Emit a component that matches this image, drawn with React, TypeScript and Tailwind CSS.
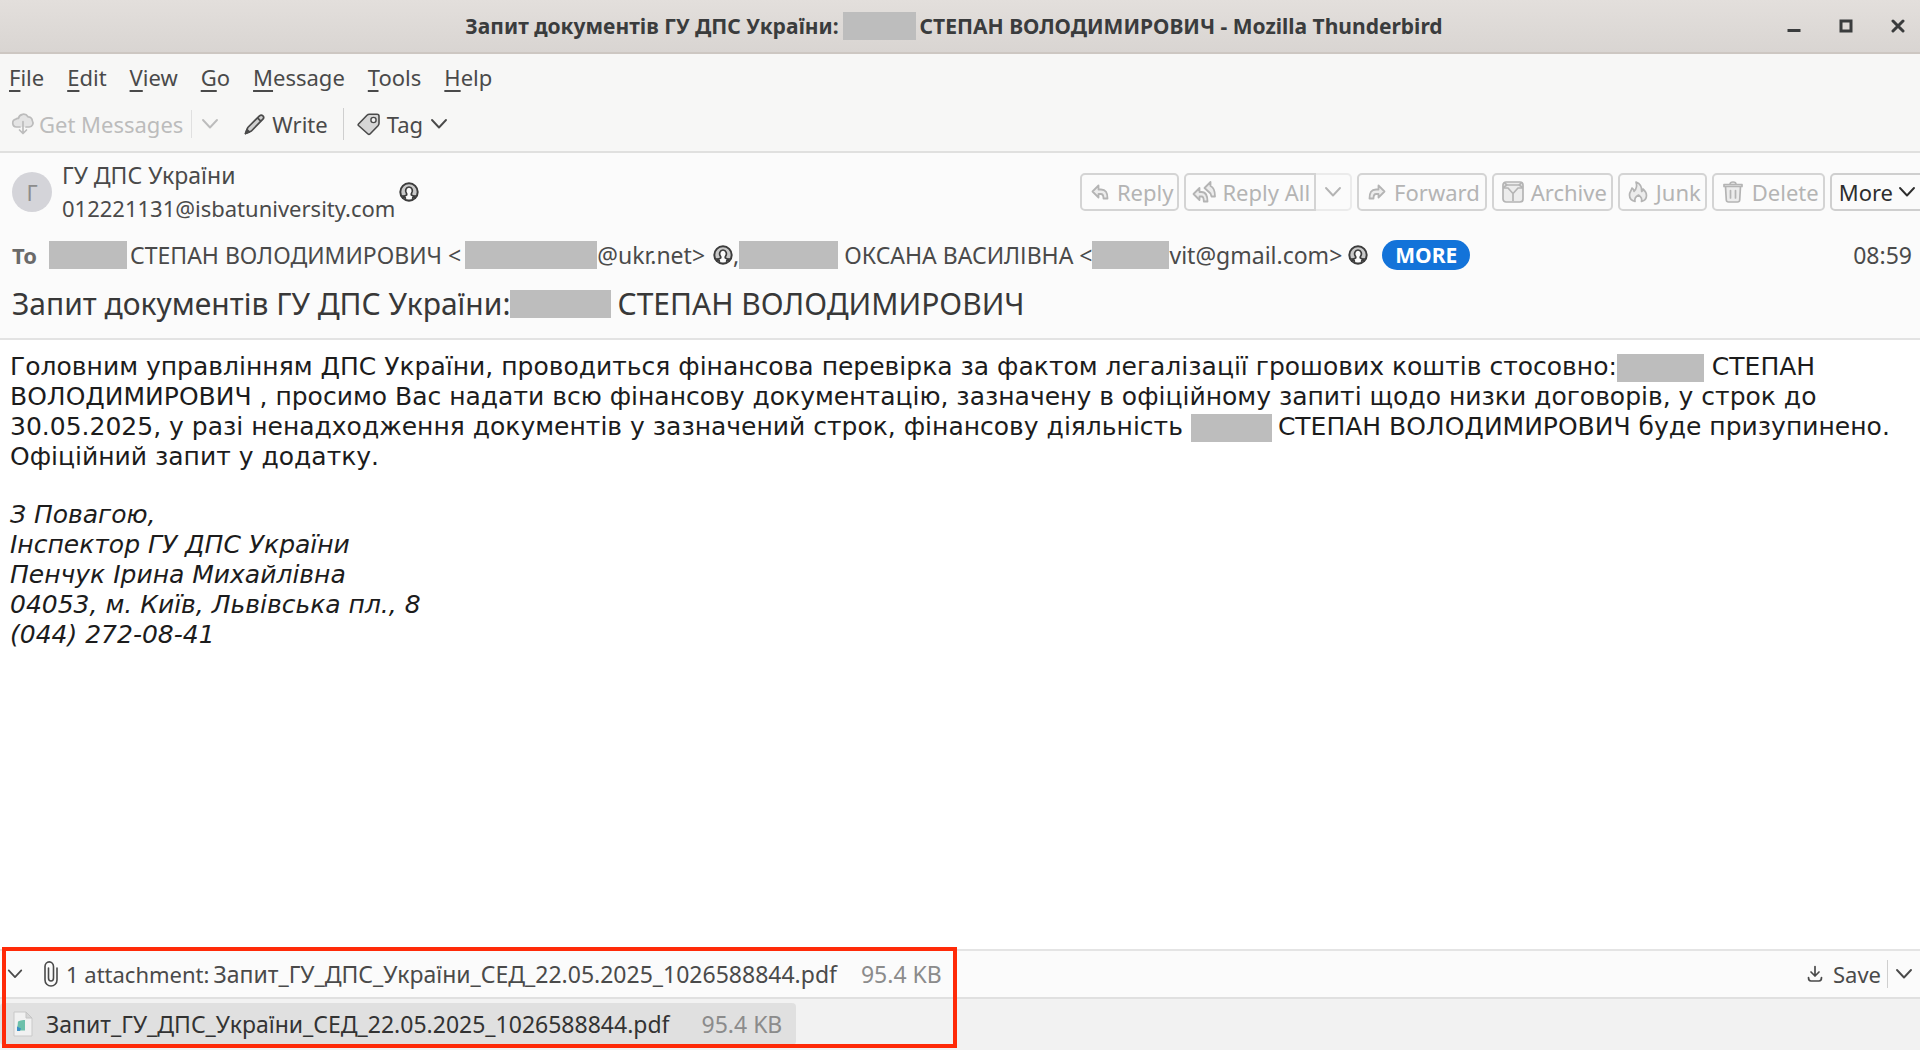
import React from "react";

type IconProps = { className?: string };

const Chevron = ({ className = "w-5 h-5" }: IconProps) => (
  <svg viewBox="0 0 20 20" className={`${className} shrink-0`} fill="none" stroke="currentColor" strokeWidth="1.9" strokeLinecap="round" strokeLinejoin="round" aria-hidden="true">
    <path d="M3 6l7 7.500 7-7.500" />
  </svg>
);

const CloudDown = () => (
  <svg viewBox="0 0 24 24" className="w-6 h-6 shrink-0" fill="none" stroke="currentColor" strokeWidth="1.7" strokeLinecap="round" strokeLinejoin="round" aria-hidden="true">
    <path d="M9 15H5.500a4 4 0 0 1-.6-7.900C5.500 6.500 6.500 6.300 7.400 6.500A5.200 5.200 0 0 1 17 4.800a4 4 0 0 1 4.300 3.800c1.700 2.700.2 6.200-3.100 6.400H15" fill="#e4e4e4" />
    <path d="M12 9.500V21M8.500 18l3.500 3.500 3.500-3.500" />
  </svg>
);

const Pencil = () => (
  <svg viewBox="0 0 22 22" className="w-[22px] h-[22px] shrink-0" fill="#cfcfcf" stroke="currentColor" strokeWidth="1.7" strokeLinejoin="round" aria-hidden="true">
    <path d="M1.500 20.500l2.300-6L15.500 2.800q1.800-1.500 3.400 0t0 3.400L7.400 18z" />
    <path d="M13.500 4.800l3.500 3.500" fill="none" />
    <path d="M1.500 20.500l1.500-4 2.500 2.500z" fill="currentColor" />
  </svg>
);

const TagIcon = () => (
  <svg viewBox="0 0 24 24" className="w-6 h-6 shrink-0" fill="#d6d6d6" stroke="currentColor" strokeWidth="1.6" strokeLinejoin="round" aria-hidden="true">
    <path d="M1.500 12L10 3.200Q11 2.200 12.500 2.200H20q2 0 2 2v7q0 1.400-1 2.500l-8 8.300q-1 .8-2 0L1.500 13.500q-.7-.8 0-1.500z" />
    <circle cx="16.500" cy="8" r="2.600" fill="#f4f4f4" strokeWidth="1.400" />
  </svg>
);

const Contact = () => (
  <svg viewBox="0 0 20 20" className="w-5 h-5 shrink-0 text-[#3c3c3c]" fill="none" stroke="currentColor" strokeWidth="2" aria-hidden="true">
    <circle cx="10" cy="10" r="8.700" fill="#c9c9c9" />
    <path d="M4 17c.2-2.400 1.600-3.400 3.600-4 .4-.6.200-1.200-.3-1.900C5.800 8.800 6.800 5 10 5s4.200 3.800 2.700 6.100c-.5.700-.7 1.300-.3 1.900 2 .6 3.400 1.600 3.600 4" fill="#fbfbfb" strokeWidth="1.700" />
    <path d="M3.500 13.500q2 .2 3 1.500l.3 3zM16.500 13.500q-2 .2-3 1.500l-.3 3z" fill="currentColor" strokeWidth="1" />
  </svg>
);

const ReplyIcon = () => (
  <svg viewBox="0 0 18 16" className="w-[18px] h-4 shrink-0" fill="#ececec" stroke="currentColor" strokeWidth="1.8" strokeLinejoin="round" aria-hidden="true">
    <path d="M7.500 1.500L1.500 7.500l6 6V10h2.300c2 0 2.700 1.200 2.700 4.500h4c0-6-1.800-9-6.500-9H7.500z" />
  </svg>
);

const ForwardIcon = () => (
  <svg viewBox="0 0 18 16" className="w-[18px] h-4 shrink-0" fill="#ececec" stroke="currentColor" strokeWidth="1.8" strokeLinejoin="round" aria-hidden="true">
    <path d="M10.500 1.500l6 6-6 6V10H8.200c-2 0-2.700 1.200-2.700 4.500h-4c0-6 1.800-9 6.500-9h2.500z" />
  </svg>
);

const ReplyAllIcon = () => (
  <svg viewBox="0 0 24 22" className="w-6 h-[22px] shrink-0" fill="#ececec" stroke="currentColor" strokeWidth="1.8" strokeLinejoin="round" aria-hidden="true">
    <path d="M18.500 1L12.500 7l6 5.500 1 3H23c0-5-1-9-4.500-10.500z" />
    <path d="M7.500 7L1.500 13l6 6v-3.500h2c1.700 0 2.300 1.500 2.300 5h3.700c0-6-1.500-9.500-6-9.500h-2z" />
  </svg>
);

const ArchiveIcon = () => (
  <svg viewBox="0 0 24 24" className="w-6 h-6 shrink-0" fill="#ececec" stroke="currentColor" strokeWidth="1.7" strokeLinejoin="round" aria-hidden="true">
    <rect x="2" y="2" width="20" height="20" rx="3" />
    <path d="M2 7.500l4-2.500h12l4 2.500M2 8h5l4.500 5h1L17 8h5M12 13v8M3.500 3L6 5M20.500 3L18 5" fill="none" />
  </svg>
);

const JunkIcon = () => (
  <svg viewBox="0 0 20 24" className="w-5 h-6 shrink-0" fill="#ececec" stroke="currentColor" strokeWidth="1.7" strokeLinejoin="round" strokeLinecap="round" aria-hidden="true">
    <path d="M7 21.500C3 20.500 1.500 18 1.500 15c0-3.500 2-4 2.500-7 1.500.8 2 2 2 3.300C8.500 9 9.300 6 8 2c4 1.500 6 5 5.700 9.500.8-.5 1.300-1.500 1.300-2.500 2.300 2 3.500 4 3.500 6.500 0 3-1.800 5.200-5 6 .8-2.700-.5-4.800-3-6.500-2.800 1.500-4.200 3.800-3.500 6.500z" />
  </svg>
);

const TrashIcon = () => (
  <svg viewBox="0 0 22 24" className="w-[22px] h-6 shrink-0" fill="#ececec" stroke="currentColor" strokeWidth="1.7" strokeLinejoin="round" strokeLinecap="round" aria-hidden="true">
    <path d="M3.500 6.500l.8 13.500q.2 2 2.200 2h9q2 0 2.200-2l.8-13.500" />
    <path d="M2 4.500h18v2H2zM8 4.300Q8 2 11 2t3 2.300M8.500 10.500v7.500M13.500 10.500v7.500" />
  </svg>
);

const Clip = () => (
  <svg viewBox="0 0 14 26" className="w-[14px] h-[26px] shrink-0" fill="none" stroke="currentColor" strokeWidth="1.6" strokeLinecap="round" aria-hidden="true">
    <path d="M4.500 7v10a2.500 3 0 0 0 5 0V5.500a3.500 3.800 0 0 0-8.500 0V19a6 6 0 0 0 12 0V7" />
  </svg>
);

const SaveIcon = () => (
  <svg viewBox="0 0 16 18" className="w-4 h-[18px] shrink-0" fill="none" stroke="currentColor" strokeWidth="1.7" strokeLinecap="round" strokeLinejoin="round" aria-hidden="true">
    <path d="M8 1.500v9.500M4 7l4 4 4-4M1.500 12.500q0 3.500 2.500 3.500h8q2.500 0 2.500-3.500" />
  </svg>
);

const FileIcon = () => (
  <svg viewBox="0 0 20 26" className="w-5 h-[26px] shrink-0" aria-hidden="true">
    <path d="M1 1h12l6 6v18H1z" fill="#f1f1f1" stroke="#c9c9c9" />
    <path d="M13 1v6h6z" fill="#d6d6d6" stroke="#c4c4c4" />
    <path d="M5 10.500q3-2 7-1.500v10.500H4z" fill="#6cc0aa" />
    <path d="M4 15.500l4 2-1 2.500H4z" fill="#3b8fc4" />
  </svg>
);

const Redacted = ({ className }: { className: string }) => (
  <span className={`inline-block h-7 shrink-0 bg-[#bdbdbd] ${className}`} />
);

const menus = ["File", "Edit", "View", "Go", "Message", "Tools", "Help"];

const actionClass =
  "flex h-[38px] items-center rounded-[5px] border-2 border-[#d4d4d4] text-[#b4b4b4]";

export default function App() {
  return (
    <div className="flex min-h-screen flex-col overflow-hidden whitespace-nowrap bg-white font-['Noto_Sans',sans-serif] text-[22px] leading-8 text-[#4a4a4a]">
      <header className="relative flex h-[54px] items-center justify-center border-b-2 border-[#cdc7c2] bg-linear-to-b from-[#e3dfdc] to-[#d9d5d2] text-[#3a3c3d]">
        <h1 className="flex items-center pr-3 text-[21px] font-bold">
          Запит документів ГУ ДПС України:
          <Redacted className="ml-1 mr-1 w-[73px]" />
          СТЕПАН ВОЛОДИМИРОВИЧ - Mozilla Thunderbird
        </h1>
        <div className="absolute right-3 flex gap-8">
          <button aria-label="Minimize" className="flex h-5 w-5 items-center justify-center">
            <svg viewBox="0 0 14 14" className="h-[14px] w-[14px]"><path d="M0.500 11.500h13" stroke="currentColor" strokeWidth="3" /></svg>
          </button>
          <button aria-label="Maximize" className="flex h-5 w-5 items-center justify-center">
            <svg viewBox="0 0 14 14" className="h-[14px] w-[14px]"><rect x="2" y="2" width="10" height="10" fill="none" stroke="currentColor" strokeWidth="3" /></svg>
          </button>
          <button aria-label="Close" className="flex h-5 w-5 items-center justify-center">
            <svg viewBox="0 0 14 14" className="h-[14px] w-[14px]"><path d="M2 2l10 10M12 2L2 12" stroke="currentColor" strokeWidth="3" strokeLinecap="round" /></svg>
          </button>
        </div>
      </header>

      <div className="border-b-2 border-[#e0e0df] bg-[#f7f7f6]">
        <nav className="flex h-[46px] items-center gap-[23px] pl-[9px]" aria-label="Application menu">
          {menus.map((m) => (
            <button key={m}>
              <span className="underline decoration-2 underline-offset-4">{m[0]}</span>
              {m.slice(1)}
            </button>
          ))}
        </nav>
        <div className="flex h-[51px] items-center pb-1 pl-[11px]">
          <button disabled className="flex items-center gap-1 text-[#bcbcbc]">
            <CloudDown />
            Get Messages
          </button>
          <span className="mx-2 h-7 w-px bg-[#e0e0e0]" />
          <button disabled aria-label="Get messages options" className="text-[#bcbcbc]"><Chevron /></button>
          <button className="ml-6 flex items-center gap-[6px]"><Pencil />Write</button>
          <span className="ml-[15px] mr-[13px] h-8 w-px bg-[#cfcfcf]" />
          <button className="flex items-center gap-[6px]"><TagIcon />Tag<Chevron /></button>
        </div>
      </div>

      <section className="flex flex-col border-b-2 border-[#e3e3e3] bg-[#fbfbfb] pl-3" aria-label="Message header">
        <div className="flex h-[77px] items-center">
          <span className="flex h-10 w-10 items-center justify-center rounded-full bg-[#d4d4d9] text-[#8c8c8c]">Г</span>
          <div className="ml-[10px] mr-1 leading-[33px]">
            <p className="text-[23px]">ГУ ДПС України</p>
            <p>012221131@isbatuniversity.com</p>
          </div>
          <Contact />
          <div className="-mr-1 ml-auto flex gap-[5px]">
            <button disabled className={`${actionClass} gap-2 pl-[9px] pr-1`}><ReplyIcon />Reply</button>
            <div className="flex">
              <button disabled className={`${actionClass} gap-[6px] rounded-r-none pl-[6px] pr-1`}><ReplyAllIcon />Reply All</button>
              <button disabled aria-label="Reply options" className="flex h-[38px] w-9 items-center justify-center rounded-r-[5px] border-2 border-l-0 border-[#ebebeb] text-[#b4b4b4]"><Chevron /></button>
            </div>
            <button disabled className={`${actionClass} gap-2 pl-[9px] pr-[5px]`}><ForwardIcon />Forward</button>
            <button disabled className={`${actionClass} gap-[6px] pl-[7px] pr-1`}><ArchiveIcon />Archive</button>
            <button disabled className={`${actionClass} gap-2 pl-2 pr-1`}><JunkIcon />Junk</button>
            <button disabled className={`${actionClass} gap-2 pl-2 pr-1`}><TrashIcon />Delete</button>
            <button className="flex h-[38px] items-center gap-1 rounded-[5px] border-2 border-[#cfcfcf] pl-[7px] pr-[5px] text-[#2e2e2e]">More<Chevron /></button>
          </div>
        </div>
        <div className="flex h-[50px] items-center pr-2 text-[23px]">
          <span className="w-[37px] text-[22px] font-bold text-[#6a6a6a]">To</span>
          <Redacted className="mr-[3px] w-[78px]" />
          СТЕПАН ВОЛОДИМИРОВИЧ &lt;
          <Redacted className="ml-1 w-[132px]" />
          <span className="mr-2">@ukr.net&gt;</span>
          <Contact />,
          <Redacted className="mr-[6px] w-[99px]" />
          ОКСАНА ВАСИЛІВНА &lt;
          <Redacted className="w-[77px]" />
          <span className="mr-[6px]">vit@gmail.com&gt;</span>
          <Contact />
          <button className="ml-[14px] h-[30px] rounded-full bg-[#1373d9] px-[13px] text-[21px] font-bold leading-[30px] text-white">MORE</button>
          <time className="ml-auto">08:59</time>
        </div>
        <h2 className="flex h-[58px] items-center pb-[10px] text-[30px] text-[#383838]">
          Запит документів ГУ ДПС України:
          <Redacted className="mr-[6px] w-[101px]" />
          СТЕПАН ВОЛОДИМИРОВИЧ
        </h2>
      </section>

      <main className="flex-1 whitespace-normal py-[12px] pl-[10px] font-['DejaVu_Sans',sans-serif] text-[25px] leading-[30px] text-[#1c1c1c]">
        <p className="whitespace-nowrap">
          Головним управлінням ДПС України, проводиться фінансова перевірка за фактом легалізації грошових коштів стосовно:
          <Redacted className="-my-2 mr-[8px] w-[87px] align-middle" />
          СТЕПАН<br />
          ВОЛОДИМИРОВИЧ , просимо Вас надати всю фінансову документацію, зазначену в офіційному запиті щодо низки договорів, у строк до<br />
          30.05.2025, у разі ненадходження документів у зазначений строк, фінансову діяльність{" "}
          <Redacted className="-my-2 mr-[6px] w-[81px] align-middle" />
          СТЕПАН ВОЛОДИМИРОВИЧ буде призупинено.<br />
          Офіційний запит у додатку.
        </p>
        <address className="mt-7 italic">
          З Повагою,<br />
          Інспектор ГУ ДПС України<br />
          Пенчук Ірина Михайлівна<br />
          04053, м. Київ, Львівська пл., 8<br />
          (044) 272-08-41
        </address>
      </main>

      <footer className="relative border-t-2 border-[#e4e4e4]">
        <div className="flex h-[48px] items-center border-b-2 border-[#e0e0e0] bg-[#fbfbfb] pl-[6px] pr-[6px]">
          <button aria-label="Toggle attachment list"><Chevron className="w-[18px] h-[18px]" /></button>
          <span className="ml-5 mr-2"><Clip /></span>
          <span>1 attachment:</span>
          <span className="ml-1 text-[23px]">Запит_ГУ_ДПС_України_СЕД_22.05.2025_1026588844.pdf</span>
          <span className="ml-6 text-[23px] text-[#8b8b8b]">95.4 KB</span>
          <button className="ml-auto flex items-center gap-[10px]"><SaveIcon />Save</button>
          <span className="mx-[6px] h-7 w-px bg-[#cfcfcf]" />
          <button aria-label="Save options"><Chevron /></button>
        </div>
        <div className="h-[51px] bg-[#f2f2f2] pt-1">
          <button className="flex h-[42px] items-center rounded-[4px] bg-[#e0e0e0] pl-[13px] pr-[14px] text-[23px] text-[#333]">
            <FileIcon />
            <span className="ml-[13px]">Запит_ГУ_ДПС_України_СЕД_22.05.2025_1026588844.pdf</span>
            <span className="ml-8 text-[#8b8b8b]">95.4 KB</span>
          </button>
        </div>
        <div className="pointer-events-none absolute -top-1 bottom-[2px] left-[2px] w-[955px] border-4 border-[#ff2a08]" />
      </footer>
    </div>
  );
}
